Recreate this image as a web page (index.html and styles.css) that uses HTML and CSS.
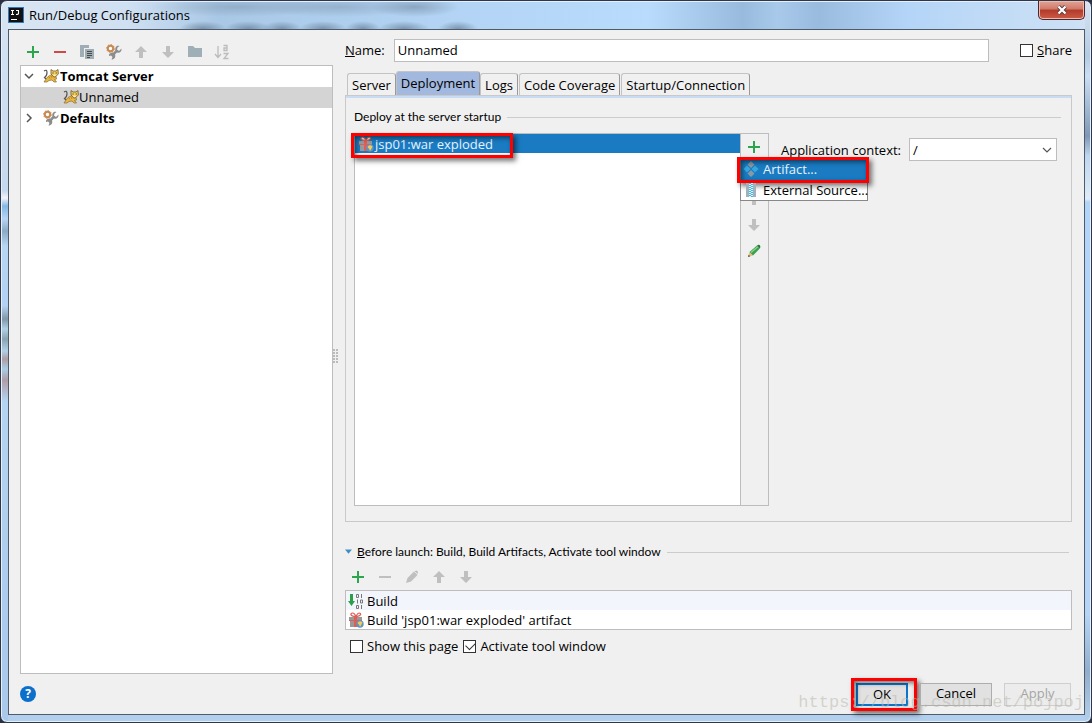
FILE: index.html
```html
<!DOCTYPE html>
<html lang="en">
<head>
<meta charset="utf-8">
<title>Run/Debug Configurations</title>
<link rel="stylesheet" href="styles.css">
</head>
<body>
<svg class="defs" aria-hidden="true">
  <symbol id="plus" viewBox="0 0 16 16"><path d="M8 2v12M2 8h12" stroke="#2da44e" stroke-width="2"/></symbol>
  <symbol id="minus" viewBox="0 0 16 16"><path d="M2 8h12" stroke="currentColor" stroke-width="2"/></symbol>
  <symbol id="up" viewBox="0 0 16 16"><path d="M8 2l6 6h-4v6H6V8H2z" fill="#bfbfbf"/></symbol>
  <symbol id="down" viewBox="0 0 16 16"><path d="M8 14L2 8h4V2h4v6h4z" fill="#bfbfbf"/></symbol>
  <symbol id="wrench" viewBox="0 0 16 16">
    <path d="M15.500 4.500 13 7l-2-1.500.5-2L13.500 2C11 1 8.500 3.500 9.500 6L7.500 8.500C5 8 2.500 9.500 3 12l2-.5 1.500 1.500-1 2.500C8.500 15.500 10 13 9 10.500L11 8.500c2.500 1 5-1 4.500-4z" fill="#8c8c8c"/>
    <circle cx="4.500" cy="4.500" r="2.700" fill="#fff" stroke="#c88a50" stroke-width="2"/><circle cx="4.500" cy="4.500" r="3.900" fill="none" stroke="#c88a50" stroke-width="1" stroke-dasharray="1.500 1.500"/>
  </symbol>
  <symbol id="cat" viewBox="0 0 16 16">
    <path d="M1 3q3-2 3 1.500T1.500 9.500L3 11" fill="none" stroke="#555" stroke-width="1.200"/>
    <path d="M5 8.500l4-2 4 2 .5 2.500-2 .5 2 2.500h-2.500l-2-2-3 .5-2 1.500H1l2-3z" fill="#e9b642" stroke="#8a6a2e" stroke-width=".7"/>
    <path d="M8 1.500l2 1.500h3l2-1.500.3 4.500-3 3h-1.600L8 6z" fill="#f5cf60" stroke="#6b5528" stroke-width=".8"/>
    <path d="M9.500 5h1M12.700 5h1" stroke="#222"/><path d="M10.500 7.300h2" stroke="#fff"/>
    <path d="M6 9l1 1.500M8 8l1 2" stroke="#a7751d" stroke-width=".7"/>
  </symbol>
  <symbol id="gift" viewBox="0 0 16 16">
    <path d="M1 5h13v3H1zM2 9h11v6H2z" fill="#999"/>
    <path d="M6 5h3v10H6zM1 8h13v1H1z" fill="#dd5f56"/>
    <path d="M7.500 4.500C2 4.500 2 1 4.500 1 6 1 7.500 3 7.500 4.500s1.500-3.500 3.500-3.500c3 0 2 3.500-3.500 3.500z" fill="#fff" stroke="#dd5f56" stroke-width="1.200"/>
    <circle cx="12" cy="12" r="3.700" fill="#5a94c5"/><path d="M9.500 11q2-3 5-.5l-1 2-1.500 2.500-.8-2z" fill="#f3cc57"/>
  </symbol>
</svg>
<div class="window">
  <header class="titlebar">
    <svg class="logo" viewBox="0 0 16 16"><rect width="16" height="16" fill="#3479be"/><rect x="1" y="1" width="14" height="14" fill="#111"/><path d="M3 3.500h3M4.500 3.500v4M3 7.500h3M8 3.500h3M10.500 3.500v3q0 1-2.500 1M3 12.500h6" fill="none" stroke="#fff" stroke-width="1.100"/></svg>
    <h1 class="title">Run/Debug Configurations</h1>
    <button class="close" aria-label="Close"><svg viewBox="0 0 12 10"><path d="M2.500 1.500l7 7M9.500 1.500l-7 7" stroke="#5c4042" stroke-width="4"/><path d="M2.500 1.500l7 7M9.500 1.500l-7 7" stroke="#fff" stroke-width="2.200"/></svg></button>
  </header>
  <div class="dialog">
    <main class="main">
      <section class="side">
        <div class="toolbar">
          <button aria-label="Add"><svg><use href="#plus"/></svg></button>
          <button class="red" aria-label="Remove"><svg><use href="#minus"/></svg></button>
          <button aria-label="Copy"><svg viewBox="0 0 16 16"><path d="M1 1h9v3H5v9H1z" fill="#9fadb5"/><path d="M6 5h9v10H6z" fill="#9fadb5"/><path d="M8 7.500h5M8 9.500h5M8 11.500h5M8 13.500h3" stroke="#4a4a4a"/></svg></button>
          <button aria-label="Edit defaults"><svg><use href="#wrench"/></svg></button>
          <button aria-label="Move up"><svg><use href="#up"/></svg></button>
          <button aria-label="Move down"><svg><use href="#down"/></svg></button>
          <button aria-label="New folder"><svg viewBox="0 0 16 16"><path d="M1 2h5l2 2h7v9H1z" fill="#9fafb8"/></svg></button>
          <button aria-label="Sort"><svg viewBox="0 0 16 16"><path d="M4 2v11M1 10l3 3.500L7 10M9.500 1.500h3.500v5H10v-2.500h3M9.500 9.500H14L10 14.500h4.500" fill="none" stroke="#bcbcbc" stroke-width="1.300"/></svg></button>
        </div>
        <ul class="tree">
          <li class="node bold"><svg class="arrow" viewBox="0 0 10 10"><path d="M1 3l4 4 4-4" fill="none" stroke="#555" stroke-width="1.500"/></svg><svg class="icon"><use href="#cat"/></svg>Tomcat Server</li>
          <li class="node child selected"><svg class="icon"><use href="#cat"/></svg>Unnamed</li>
          <li class="node bold"><svg class="arrow" viewBox="0 0 10 10"><path d="M3 1l4 4-4 4" fill="none" stroke="#555" stroke-width="1.500"/></svg><svg class="icon"><use href="#wrench"/></svg>Defaults</li>
        </ul>
      </section>
      <div class="splitter"><span></span></div>
      <section class="content">
        <div class="namerow">
          <label for="name"><u>N</u>ame:</label>
          <input id="name" class="field" type="text" value="Unnamed">
          <label class="check share"><input type="checkbox"><span><u>S</u>hare</span></label>
        </div>
        <nav class="tabs">
          <button class="tab">Server</button><button class="tab active">Deployment</button><button class="tab">Logs</button><button class="tab">Code Coverage</button><button class="tab">Startup/Connection</button>
        </nav>
        <div class="panel">
          <h2 class="legend">Deploy at the server startup</h2>
          <div class="deploy">
            <ul class="artifacts">
              <li class="artifact"><svg class="icon"><use href="#gift"/></svg>jsp01:war exploded<span class="mark"></span></li>
            </ul>
            <div class="strip">
              <button aria-label="Add artifact"><svg><use href="#plus"/></svg></button>
              <button aria-label="Remove artifact" class="grey"><svg><use href="#minus"/></svg></button>
              <button aria-label="Move up"><svg><use href="#up"/></svg></button>
              <button aria-label="Move down"><svg><use href="#down"/></svg></button>
              <button aria-label="Edit artifact"><svg viewBox="0 0 16 16"><path d="M2 14l1.500-5L7 12.500z" fill="#e8bd7c"/><path d="M2 14l.7-2.300 1.500 1.500z" fill="#444"/><path d="M3.500 9L11 2.500l2.800 3L7 12.500z" fill="#39a04b"/><path d="M5 9.500l7-6" stroke="#8bd08e" stroke-width="1.500"/><path d="M11 2.500q2-1.500 3 0t-.2 3z" fill="#23763a"/></svg></button>
              <div class="menu">
                <button class="item current"><svg class="icon" viewBox="0 0 16 16"><path d="M8 0l3.500 3.500L8 7 4.500 3.500zM8 9l3.500 3.500L8 16l-3.500-3.500z" fill="#8799a5"/><path d="M4 4.500L7.500 8 4 11.500.5 8zM12 4.500L15.500 8 12 11.500 8.500 8z" fill="#36a7dc"/></svg>Artifact...<span class="mark"></span></button>
                <button class="item"><svg class="icon" viewBox="0 0 16 16"><path d="M3 1h10v14H3z" fill="#a4b1ba"/><path d="M6 1h4v14H6z" fill="#d8f4ff"/><path d="M7 1v14M9 2v13" stroke="#43b7df" stroke-width="2" stroke-dasharray="1 1"/></svg>External Source...</button>
              </div>
            </div>
            <div class="context">
              <label for="ctx">Application context:</label>
              <div class="combo"><select id="ctx" class="field"><option>/</option></select><svg viewBox="0 0 10 10"><path d="M1 3l4 4 4-4" fill="none" stroke="#555" stroke-width="1.200"/></svg></div>
            </div>
          </div>
        </div>
        <section class="before">
          <h2 class="legend"><svg class="tri" viewBox="0 0 8 6"><path d="M0 0h8L4 5z" fill="#3c8fc5"/></svg><span><u>B</u>efore launch: Build, Build Artifacts, Activate tool window</span></h2>
          <div class="toolbar">
            <button aria-label="Add task"><svg><use href="#plus"/></svg></button>
            <button class="grey" aria-label="Remove task"><svg><use href="#minus"/></svg></button>
            <button aria-label="Edit task"><svg viewBox="0 0 16 16"><path d="M2 14l1.500-5L10 2.500 13.500 6 7 12.500zM11 2q3-1.500 3 2l-.5 1L10.500 2.300z" fill="#bfbfbf"/></svg></button>
            <button aria-label="Move up"><svg><use href="#up"/></svg></button>
            <button aria-label="Move down"><svg><use href="#down"/></svg></button>
          </div>
          <ul class="tasks">
            <li><svg class="icon" viewBox="0 0 16 16"><path d="M2 1h3v7h2l-3.500 5L0 8h2z" fill="#2c9f49"/><path d="M8.500 1.500h2v3h-2zM13.500 1v4M9.500 6.500v4M12.500 7h2v3h-2zM8.500 12.500h2v3h-2zM13.500 12v4" fill="none" stroke="#777"/></svg>Build</li>
            <li><svg class="icon"><use href="#gift"/></svg>Build 'jsp01:war exploded' artifact</li>
          </ul>
          <div class="checks">
            <label class="check"><input type="checkbox">Show this page</label>
            <label class="check"><input type="checkbox" checked>Activate tool window</label>
          </div>
        </section>
      </section>
    </main>
    <footer class="footer">
      <button class="help" aria-label="Help">?</button>
      <button class="btn ok">OK<span class="mark"></span></button>
      <button class="btn">Cancel</button>
      <button class="btn" disabled>Apply</button>
      <span class="watermark">https://blog.csdn.net/pojpoj</span>
    </footer>
  </div>
</div>
</body>
</html>
```
FILE: styles.css
```css
* { box-sizing: border-box; }
body { margin: 0; background: #2b3040; color: #000; font: 13px/18px "Open Sans", "Noto Sans", sans-serif; }
button, input, select { font: inherit; color: inherit; }
button { padding: 0; border: 0; background: none; }
ul, h1, h2 { margin: 0; padding: 0; font-size: inherit; font-weight: normal; list-style: none; }
svg { display: block; flex: none; }
.defs { position: absolute; width: 0; height: 0; }
.icon, .toolbar svg, .strip svg { width: 16px; height: 16px; }

.window {
  display: flex; flex-direction: column; height: 100vh; padding: 0 6px 7px 7px;
  border: 1px solid #30364a; border-radius: 7px;
  background:
    linear-gradient(#d7e4f2 0, #c5d9ee 190px, #f3f3fa 197px, #83b8e4 205px, #b7d5f3 218px, #8baac5 230px, #b8d5f5 245px, #b3d1f2 305px, #8198a8 318px, #afd0e5 328px, #8ba3b0 338px, #afd0e5 350px, #b09da4 358px, #a9cce3 368px, #b09da4 379px, #b5d3f2 400px, #a9c8ea 100%) left / 7px 100% no-repeat,
    linear-gradient(#d7e4f2 0, #b4cbe2 55px, #cadff4 75px, #7f98b5 135px, #bed6ef 155px, #dfebf7 198px, #b2d4f8 201px, #b6d5f6 85%, #91aecb 93%, #b3cfeb 100%) right / 7px 100% no-repeat,
    #b2cfed;
  box-shadow: inset 0 0 0 1px #e4f1fd;
}
.titlebar {
  position: relative; display: flex; align-items: center; gap: 5px; height: 27px; flex: none; margin-top: 1px; padding-bottom: 1px;
  background:
    radial-gradient(90px 10px at 230px 5px, #7891a877, transparent),
    radial-gradient(80px 10px at 330px 5px, #7891a877, transparent),
    radial-gradient(44px 10px at 407px 5px, #7188a199, transparent),
    radial-gradient(24px 8px at 195px 27px, #526a8299, transparent),
    radial-gradient(24px 8px at 240px 27px, #526a8299, transparent),
    radial-gradient(20px 8px at 274px 27px, #526a8299, transparent),
    radial-gradient(24px 8px at 315px 27px, #526a8299, transparent),
    radial-gradient(18px 8px at 355px 27px, #526a8299, transparent),
    radial-gradient(26px 8px at 396px 27px, #526a8299, transparent),
    radial-gradient(20px 8px at 450px 27px, #526a8299, transparent),
    linear-gradient(90deg, #d9e6f3 0, #cfe0f2 120px, #a9c8e6 210px, #b2d3f3 430px, #b9dbfc 640px, #98bbdd 735px, #a8c9ea 770px, #99bbde 810px, #b4d5f7 900px, #cee1f5 100%);
}
.logo { width: 16px; height: 16px; }
.close {
  position: absolute; right: 0; top: -1px; width: 47px; height: 19px; display: grid; place-items: center;
  border: 1px solid #4b2630; border-top: 0; border-radius: 0 0 5px 5px;
  background: linear-gradient(#e0a494, #d0786a 45%, #b23a2a 50%, #cc5b46);
  box-shadow: inset 0 0 0 1px #efb9ac;
}
.close svg { width: 12px; height: 10px; }
.dialog { flex: 1; min-height: 0; display: flex; flex-direction: column; border: 1px solid #4f5a6b; background: #f0f0f0; }

.main { flex: 1; min-height: 0; display: flex; padding: 8px 12px 0 11px; }
.side { width: 313px; flex: none; display: flex; flex-direction: column; }
.toolbar { display: flex; gap: 11px; padding: 4px 5px; }
.toolbar .red { color: #cc4b46; }
.grey { color: #bfbfbf; }
.side .toolbar { height: 27px; }
.tree { flex: 1; border: 1px solid #bdbdbd; background: #fff; }
.node { display: flex; align-items: center; height: 21px; padding: 0 0 2px 3px; }
.node .arrow { width: 10px; height: 10px; margin-right: 9px; }
.bold { font-weight: bold; }
.bold .icon { margin-right: 1px; }
.child { padding-left: 42px; }
.selected { background: #d4d4d4; }
.splitter { width: 12px; flex: none; display: grid; place-items: center start; }
.splitter span { width: 6px; height: 15px; background: radial-gradient(circle at 1px 1px, #bbb 1px, transparent 1px) 0 0 / 3px 3px; }

.content { flex: 1; min-width: 0; display: flex; flex-direction: column; padding-top: 1px; }
.namerow { display: flex; align-items: center; }
.field { height: 23px; padding: 0 3px 2px; border: 1px solid #bdbdbd; border-radius: 0; background: #fff; outline: 0; }
.namerow .field { flex: 1; min-width: 0; margin-left: 9px; }
.namerow label { padding-bottom: 1px; }
.check { display: flex; align-items: center; gap: 4px; }
.share { margin-left: 31px; }
.check input { appearance: none; width: 13px; height: 13px; margin: 0; border: 1px solid #333; background: #fff; }
.check input:checked { position: relative; }
.check input:checked::after { content: ""; position: absolute; left: 2px; top: 1px; width: 8px; height: 5px; border: solid #333; border-width: 0 0 1px 1px; transform: rotate(-45deg); }

.tabs { display: flex; align-items: flex-end; gap: 1px; margin-top: 9px; padding-left: 2px; }
.tab { height: 22px; padding: 0 4px; border: 1px solid #c3c3c3; border-right-color: #999; border-bottom: 0; border-radius: 3px 3px 0 0; }
.tab.active { height: 24px; margin: 0 -1px; padding: 0 4px 2px; background: #a2b8df; }
.panel { flex: 1; min-height: 0; display: flex; flex-direction: column; padding: 12px 10px 15px 8px; border: 1px solid #c9c9c9; box-shadow: inset 0 2px #c9dcf3; }
.legend { display: flex; align-items: center; font: 12px/18px Lato, "Open Sans", sans-serif; }
.legend::after { content: ""; flex: 1; height: 1px; margin-left: 6px; background: #ccc; }
.deploy { flex: 1; display: flex; align-items: stretch; margin-top: 7px; }
.artifacts { width: 387px; border: 1px solid #bdbdbd; background: #fff; }
.artifact { position: relative; display: flex; align-items: center; gap: 1px; height: 19px; padding-left: 3px; background: #1a7bc2; color: #e8f2fa; }
.mark { position: absolute; border: 3px solid #f00; box-shadow: 3px 3px 5px #0008, inset 2px 2px 5px #0008; pointer-events: none; }
.artifact .mark { left: -4px; top: -1px; width: 162px; height: 25px; }
.strip { position: relative; width: 28px; flex: none; display: flex; flex-direction: column; align-items: center; gap: 10px; padding: 5px 1px 0 0; border: solid #bdbdbd; border-width: 1px 1px 1px 0; }
.menu { position: absolute; z-index: 1; left: -1px; top: 24px; width: 128px; border: 1px solid #888; background: #fff; }
.item { position: relative; display: flex; align-items: center; gap: 4px; width: 100%; height: 20px; padding: 0 0 1px 2px; white-space: nowrap; }
.item.current { height: 21px; background: #1a7bc2; color: #e8f2fa; }
.item .mark { left: -4px; top: -2px; width: 132px; height: 26px; }
.context { flex: 1; display: flex; align-items: center; align-self: flex-start; justify-content: flex-end; gap: 8px; padding: 5px 4px 0 0; white-space: nowrap; }
.combo { position: relative; width: 148px; }
.combo .field { width: 100%; appearance: none; padding-bottom: 0; }
.combo svg { position: absolute; right: 5px; top: 7px; width: 10px; height: 10px; pointer-events: none; }

.before { margin-top: 21px; padding-bottom: 19px; }
.before .legend { margin-right: 3px; }
.tri { width: 7px; height: 6px; margin-right: 5px; }
.before .toolbar { padding: 8px 5px 5px; }
.tasks { border: 1px solid #bdbdbd; background: #fff; }
.tasks li { display: flex; align-items: center; gap: 3px; height: 19px; padding-left: 2px; }
.tasks li:first-child { background: #f2f5fb; }
.checks { display: flex; gap: 5px; padding: 7px 5px 0; }

.footer { position: relative; display: flex; align-items: center; gap: 12px; height: 40px; flex: none; padding: 0 13px 0 11px; }
.help { width: 16px; height: 16px; margin-right: auto; border-radius: 50%; background: #0b6fcb; color: #fff; font-size: 12px; line-height: 16px; font-weight: bold; }
.btn { position: relative; width: 72px; height: 23px; padding-bottom: 2px; border: 1px solid #adadad; background: #e1e1e1; }
.btn.ok { width: 52px; border: 2px solid #0b74cc; }
.btn:disabled { width: 67px; border-color: #cfcfcf; background: #ececec; color: #a5a5a5; }
.ok .mark { left: -7px; top: -7px; width: 66px; height: 33px; }
.watermark { position: absolute; right: 0; bottom: 1px; font: 17px/20px "Liberation Mono", monospace; color: #b8b8ac88; pointer-events: none; }
```
